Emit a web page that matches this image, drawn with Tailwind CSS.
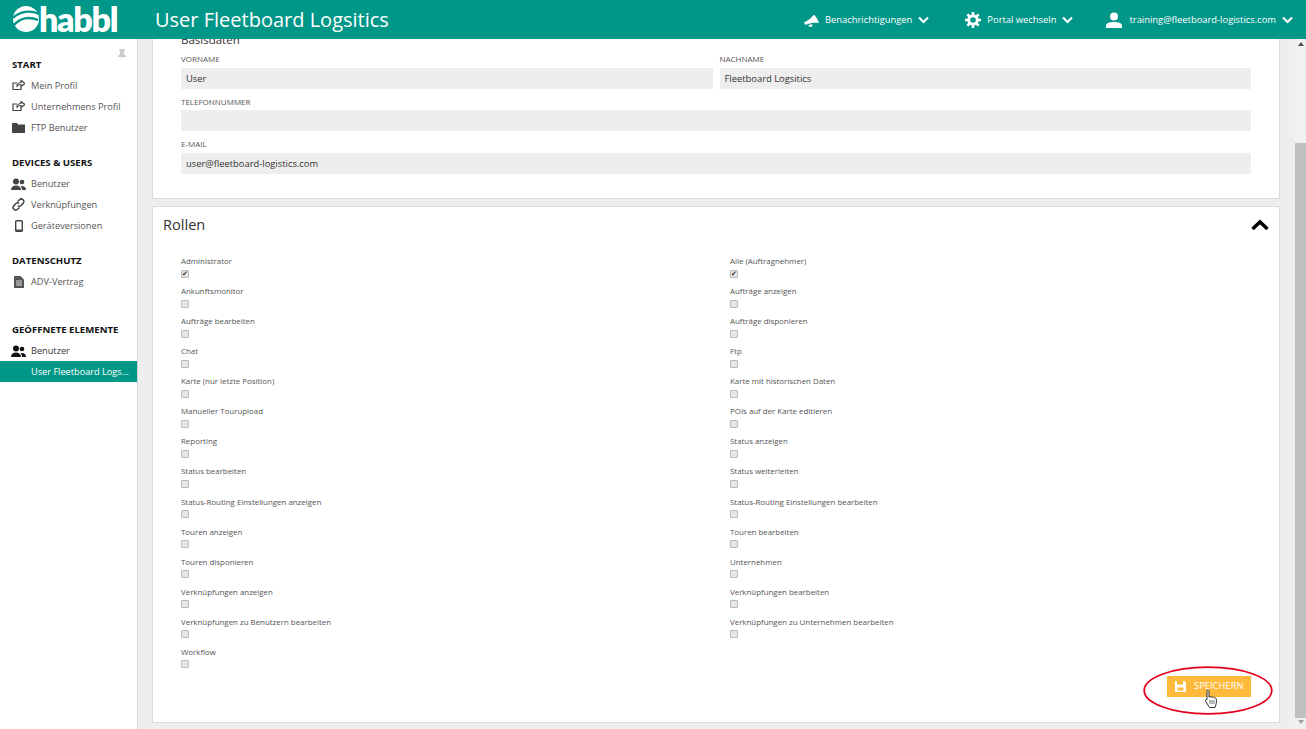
<!DOCTYPE html>
<html lang="de">
<head>
<meta charset="utf-8">
<title>User Fleetboard Logsitics</title>
<script src="https://cdn.jsdelivr.net/npm/@tailwindcss/browser@4"></script>
</head>
<body class="h-[729px] w-[1306px] overflow-hidden bg-[#eeeeee] font-['Open_Sans','Liberation_Sans',sans-serif] text-[#555]">
<div class="relative flex h-[729px] flex-col">
  <header class="relative z-10 flex h-[39px] shrink-0 items-center bg-[#009688] text-white">
    <div class="flex w-[155px] items-center pl-[12px]">
      <svg width="28" height="28" viewBox="0 0 28 28" class="-mt-[1px]"><circle cx="14" cy="14" r="13" fill="#fff"/><path d="M1 13C8 6 18 5 27 9M2 20C8 13 17 11 26 15" stroke="#009688" stroke-width="2.400" fill="none"/></svg>
      <span class="-ml-[1px] mt-[-1px] text-[34px] leading-[38px] font-extrabold tracking-[-1.300px] font-['Lato',sans-serif]">habbl</span>
    </div>
    <h1 class="text-[20px] leading-none">User Fleetboard Logsitics</h1>
    <nav class="ml-auto flex items-center pt-[1px] text-[9.400px]">
      <svg width="16" height="13" viewBox="0 0 16 13" class="mr-[5px]"><path d="M0 8.500C4 7 7 4 10 .8c1.500 1 4 5 5 8.200-4-.5-9 0-12 1.500L1 10.500zM4.500 11l4-.8-.5 2.500H5z" fill="#fff"/></svg>
      <span>Benachrichtigungen</span>
      <svg width="11" height="8" viewBox="0 0 11 8" class="ml-[6px]"><path d="M1 1.500 5.500 6 10 1.500" stroke="#fff" stroke-width="2" fill="none"/></svg>
      <svg width="16" height="16" viewBox="0 0 16 16" class="ml-[36px] mr-[6px]"><circle cx="8" cy="8" r="4.300" fill="none" stroke="#fff" stroke-width="3"/><path d="M8 0v16M0 8h16M2.300 2.300l11.400 11.400M13.700 2.300 2.300 13.700" stroke="#fff" stroke-width="2.600" stroke-dasharray="3 10 3 0"/></svg>
      <span>Portal wechseln</span>
      <svg width="11" height="8" viewBox="0 0 11 8" class="ml-[6px]"><path d="M1 1.500 5.500 6 10 1.500" stroke="#fff" stroke-width="2" fill="none"/></svg>
      <svg width="16" height="16" viewBox="0 0 16 16" class="ml-[33px] mr-[7px]"><circle cx="8" cy="4.500" r="4" fill="#fff"/><path d="M0 16v-2.500C0 11 4 10 8 10s8 1 8 3.500V16z" fill="#fff"/></svg>
      <span>training@fleetboard-logistics.com</span>
      <svg width="11" height="8" viewBox="0 0 11 8" class="ml-[6px] mr-[13px]"><path d="M1 1.500 5.500 6 10 1.500" stroke="#fff" stroke-width="2" fill="none"/></svg>
    </nav>
  </header>

  <div class="flex min-h-0 flex-1">
    <aside class="relative w-[138px] shrink-0 border-r border-[#d5d5d5] bg-white pt-[15px] text-[9.200px] whitespace-nowrap">
      <svg width="8" height="12" viewBox="0 0 8 12" class="absolute left-[118px] top-[10px]"><path d="M1 0h6v1L6 2v3l2 2v1H4.500L4 12l-.5-4H0V7l2-2V2L1 1z" fill="#ccc"/></svg>
      <h2 class="h-[21px] pl-[12px] text-[9.600px] leading-[21px] font-bold text-[#111]">START</h2>
      <a class="flex h-[21px] items-center"><span class="flex w-[31px] justify-center pl-[6px]"><svg width="13" height="11" viewBox="0 0 13 11"><path d="M9 6.500v3H1V3h4M5 6c0-2 2-3.500 4-3.500V.5L13 3.500 9 6.500v-2C7.500 4.500 6 5 5 6z" stroke="#444" stroke-width="1.200" fill="none"/></svg></span>Mein Profil</a>
      <a class="flex h-[21px] items-center"><span class="flex w-[31px] justify-center pl-[6px]"><svg width="13" height="11" viewBox="0 0 13 11"><path d="M9 6.500v3H1V3h4M5 6c0-2 2-3.500 4-3.500V.5L13 3.500 9 6.500v-2C7.500 4.500 6 5 5 6z" stroke="#444" stroke-width="1.200" fill="none"/></svg></span>Unternehmens Profil</a>
      <a class="flex h-[21px] items-center"><span class="flex w-[31px] justify-center pl-[6px]"><svg width="13" height="10" viewBox="0 0 13 10"><path d="M0 0h5l1 1.500h7V10H0z" fill="#444"/></svg></span>FTP Benutzer</a>

      <h2 class="mt-[14px] h-[21px] pl-[12px] text-[9.600px] leading-[21px] font-bold text-[#111]">DEVICES &amp; USERS</h2>
      <a class="flex h-[21px] items-center"><span class="flex w-[31px] justify-center pl-[6px]"><svg width="15" height="12" viewBox="0 0 15 12"><circle cx="5" cy="3.500" r="3" fill="#444"/><path d="M0 12c0-3 2-4.500 5-4.500s5 1.500 5 4.500z" fill="#444"/><circle cx="11" cy="4" r="2.300" fill="#444"/><path d="M11 8c2 0 4 1 4 4h-4c0-1.500-.5-3-1.500-3.500z" fill="#444"/></svg></span>Benutzer</a>
      <a class="flex h-[21px] items-center"><span class="flex w-[31px] justify-center pl-[6px]"><svg width="13" height="13" viewBox="0 0 13 13"><path d="M5.500 3.500 7.500 1.800a2.500 2.500 0 0 1 3.600 3.600L9 7.500a2.500 2.500 0 0 1-3.200.2M7.500 9.500l-2 1.700a2.500 2.500 0 0 1-3.600-3.600L4 5.500a2.500 2.500 0 0 1 3.200-.2" stroke="#444" stroke-width="1.500" fill="none"/></svg></span>Verknüpfungen</a>
      <a class="flex h-[21px] items-center"><span class="flex w-[31px] justify-center pl-[6px]"><svg width="8" height="12" viewBox="0 0 8 12"><rect x=".7" y=".7" width="6.600" height="10.600" rx="1" stroke="#444" stroke-width="1.400" fill="none"/><path d="M1 9.500h6V12H1z" fill="#444"/></svg></span>Geräteversionen</a>

      <h2 class="mt-[14px] h-[21px] pl-[12px] text-[9.600px] leading-[21px] font-bold text-[#111]">DATENSCHUTZ</h2>
      <a class="flex h-[21px] items-center"><span class="flex w-[31px] justify-center pl-[6px]"><svg width="10" height="12" viewBox="0 0 10 12"><path d="M0 0h6.500L10 3.500V12H0z" fill="#555"/><path d="M2 5h6M2 7h6M2 9h6" stroke="#fff" stroke-width=".8"/></svg></span>ADV-Vertrag</a>

      <h2 class="mt-[27px] h-[21px] pl-[12px] text-[9.600px] leading-[21px] font-bold text-[#111]">GEÖFFNETE ELEMENTE</h2>
      <a class="flex h-[21px] items-center text-[#333]"><span class="flex w-[31px] justify-center pl-[6px]"><svg width="15" height="12" viewBox="0 0 15 12"><circle cx="5" cy="3.500" r="3" fill="#111"/><path d="M0 12c0-3 2-4.500 5-4.500s5 1.500 5 4.500z" fill="#111"/><circle cx="11" cy="4" r="2.300" fill="#111"/><path d="M11 8c2 0 4 1 4 4h-4c0-1.500-.5-3-1.500-3.500z" fill="#111"/></svg></span>Benutzer</a>
      <a class="flex h-[21px] items-center bg-[#009688] pl-[31px] text-white">User Fleetboard Logs...</a>
    </aside>

    <main class="min-w-0 flex-1 overflow-hidden pl-[14px] pr-[15px]">
      <section class="-mt-[26px] h-[186px] border-[1px] border-[#dcdcdc] bg-white pl-[28px] pr-[28px] pt-[14px]">
        <h3 class="h-[24px] text-[11.500px] leading-[24px] text-[#333]">Basisdaten</h3>
        <div class="grid grid-cols-2 gap-x-[7px]">
          <label class="block"><span class="block h-[16px] text-[8px] leading-[14px]">VORNAME</span><span class="block h-[21px] bg-[#eeeeee] pl-[5px] text-[9.400px] leading-[21px] text-[#333]">User</span></label>
          <label class="block"><span class="block h-[16px] text-[8px] leading-[14px]">NACHNAME</span><span class="block h-[21px] bg-[#eeeeee] pl-[5px] text-[9.400px] leading-[21px] text-[#333]">Fleetboard Logsitics</span></label>
        </div>
        <label class="mt-[5px] block"><span class="block h-[16px] text-[8px] leading-[15px]">TELEFONNUMMER</span><span class="block h-[21px] bg-[#eeeeee]"></span></label>
        <label class="mt-[6px] block"><span class="block h-[16px] text-[8px] leading-[14px]">E-MAIL</span><span class="block h-[21px] bg-[#eeeeee] pl-[5px] text-[9.400px] leading-[21px] text-[#333]">user@fleetboard-logistics.com</span></label>
      </section>

      <section class="relative mt-[7px] h-[517px] border-[1px] border-[#dcdcdc] bg-white">
        <div class="flex h-[36px] items-center pl-[10px] text-[14.600px] text-[#333]">Rollen</div>
        <svg width="18" height="12" viewBox="0 0 18 12" class="absolute right-[10px] top-[12px]"><path d="M1.500 10 9 3l7.500 7" stroke="#000" stroke-width="3.500" fill="none"/></svg>
        <div class="mt-[12px] grid grid-cols-[549px_1fr] pl-[28px] text-[7.900px] leading-[12px]">
          <div class="h-[30.070px]">Administrator<span class="mt-[2.500px] flex h-[8px] w-[8px] items-center justify-center rounded-[1px] border border-[#bbb] bg-[#e6e6e6] text-[7px] leading-none text-[#333]">✔</span></div>
          <div class="h-[30.070px]">Alle (Auftragnehmer)<span class="mt-[2.500px] flex h-[8px] w-[8px] items-center justify-center rounded-[1px] border border-[#bbb] bg-[#e6e6e6] text-[7px] leading-none text-[#333]">✔</span></div>
          <div class="h-[30.070px]">Ankunftsmonitor<span class="mt-[2.500px] block h-[8px] w-[8px] rounded-[1px] border border-[#bbb] bg-[#e6e6e6]"></span></div>
          <div class="h-[30.070px]">Aufträge anzeigen<span class="mt-[2.500px] block h-[8px] w-[8px] rounded-[1px] border border-[#bbb] bg-[#e6e6e6]"></span></div>
          <div class="h-[30.070px]">Aufträge bearbeiten<span class="mt-[2.500px] block h-[8px] w-[8px] rounded-[1px] border border-[#bbb] bg-[#e6e6e6]"></span></div>
          <div class="h-[30.070px]">Aufträge disponieren<span class="mt-[2.500px] block h-[8px] w-[8px] rounded-[1px] border border-[#bbb] bg-[#e6e6e6]"></span></div>
          <div class="h-[30.070px]">Chat<span class="mt-[2.500px] block h-[8px] w-[8px] rounded-[1px] border border-[#bbb] bg-[#e6e6e6]"></span></div>
          <div class="h-[30.070px]">Ftp<span class="mt-[2.500px] block h-[8px] w-[8px] rounded-[1px] border border-[#bbb] bg-[#e6e6e6]"></span></div>
          <div class="h-[30.070px]">Karte (nur letzte Position)<span class="mt-[2.500px] block h-[8px] w-[8px] rounded-[1px] border border-[#bbb] bg-[#e6e6e6]"></span></div>
          <div class="h-[30.070px]">Karte mit historischen Daten<span class="mt-[2.500px] block h-[8px] w-[8px] rounded-[1px] border border-[#bbb] bg-[#e6e6e6]"></span></div>
          <div class="h-[30.070px]">Manueller Tourupload<span class="mt-[2.500px] block h-[8px] w-[8px] rounded-[1px] border border-[#bbb] bg-[#e6e6e6]"></span></div>
          <div class="h-[30.070px]">POIs auf der Karte editieren<span class="mt-[2.500px] block h-[8px] w-[8px] rounded-[1px] border border-[#bbb] bg-[#e6e6e6]"></span></div>
          <div class="h-[30.070px]">Reporting<span class="mt-[2.500px] block h-[8px] w-[8px] rounded-[1px] border border-[#bbb] bg-[#e6e6e6]"></span></div>
          <div class="h-[30.070px]">Status anzeigen<span class="mt-[2.500px] block h-[8px] w-[8px] rounded-[1px] border border-[#bbb] bg-[#e6e6e6]"></span></div>
          <div class="h-[30.070px]">Status bearbeiten<span class="mt-[2.500px] block h-[8px] w-[8px] rounded-[1px] border border-[#bbb] bg-[#e6e6e6]"></span></div>
          <div class="h-[30.070px]">Status weiterleiten<span class="mt-[2.500px] block h-[8px] w-[8px] rounded-[1px] border border-[#bbb] bg-[#e6e6e6]"></span></div>
          <div class="h-[30.070px]">Status-Routing Einstellungen anzeigen<span class="mt-[2.500px] block h-[8px] w-[8px] rounded-[1px] border border-[#bbb] bg-[#e6e6e6]"></span></div>
          <div class="h-[30.070px]">Status-Routing Einstellungen bearbeiten<span class="mt-[2.500px] block h-[8px] w-[8px] rounded-[1px] border border-[#bbb] bg-[#e6e6e6]"></span></div>
          <div class="h-[30.070px]">Touren anzeigen<span class="mt-[2.500px] block h-[8px] w-[8px] rounded-[1px] border border-[#bbb] bg-[#e6e6e6]"></span></div>
          <div class="h-[30.070px]">Touren bearbeiten<span class="mt-[2.500px] block h-[8px] w-[8px] rounded-[1px] border border-[#bbb] bg-[#e6e6e6]"></span></div>
          <div class="h-[30.070px]">Touren disponieren<span class="mt-[2.500px] block h-[8px] w-[8px] rounded-[1px] border border-[#bbb] bg-[#e6e6e6]"></span></div>
          <div class="h-[30.070px]">Unternehmen<span class="mt-[2.500px] block h-[8px] w-[8px] rounded-[1px] border border-[#bbb] bg-[#e6e6e6]"></span></div>
          <div class="h-[30.070px]">Verknüpfungen anzeigen<span class="mt-[2.500px] block h-[8px] w-[8px] rounded-[1px] border border-[#bbb] bg-[#e6e6e6]"></span></div>
          <div class="h-[30.070px]">Verknüpfungen bearbeiten<span class="mt-[2.500px] block h-[8px] w-[8px] rounded-[1px] border border-[#bbb] bg-[#e6e6e6]"></span></div>
          <div class="h-[30.070px]">Verknüpfungen zu Benutzern bearbeiten<span class="mt-[2.500px] block h-[8px] w-[8px] rounded-[1px] border border-[#bbb] bg-[#e6e6e6]"></span></div>
          <div class="h-[30.070px]">Verknüpfungen zu Unternehmen bearbeiten<span class="mt-[2.500px] block h-[8px] w-[8px] rounded-[1px] border border-[#bbb] bg-[#e6e6e6]"></span></div>
          <div class="h-[30.070px]">Workflow<span class="mt-[2.500px] block h-[8px] w-[8px] rounded-[1px] border border-[#bbb] bg-[#e6e6e6]"></span></div>
        </div>
        <button class="absolute left-[1014px] top-[469px] flex h-[21px] w-[84px] items-center bg-[#ffb93b] pl-[8px] text-[9.400px] text-white">
          <svg width="11" height="11" viewBox="0 0 11 11" class="mr-[8px] -mt-[1px]"><path d="M0 0h2v3.500h6V0h1.500L11 1.500V11H0zM2.500 6.500v3h6v-3z" fill="#fff"/></svg>
          SPEICHERN
        </button>
      </section>
    </main>

    <div class="flex w-[11px] shrink-0 flex-col bg-[#f1f1f1]">
      <div class="flex h-[104px] justify-center pt-[3px]"><svg width="6" height="4" viewBox="0 0 6 4"><path d="M3 0l3 4H0z" fill="#505050"/></svg></div>
      <div class="h-[575px] bg-[#c1c1c1]"></div>
      <div class="flex flex-1 justify-center pt-[2px]"><svg width="6" height="4" viewBox="0 0 6 4"><path d="M0 0h6L3 4z" fill="#a0a0a0"/></svg></div>
    </div>
  </div>

  <svg width="130" height="50" viewBox="0 0 130 50" class="absolute left-[1143px] top-[666px] z-20"><ellipse cx="65" cy="24.500" rx="63.800" ry="23.300" fill="none" stroke="#e3001b" stroke-width="1.800"/></svg>
  <svg width="14" height="20" viewBox="0 0 14 20" class="absolute left-[1204px] top-[689px] z-30"><path d="M3 1.500c.8-.8 2-.3 2 .8V8l1-.3c.7-.2 1.500 0 2 .5 1-.3 1.700 0 2 .6 1-.2 2 .3 2.300 1.200.3 2 .2 4-.5 6l-.8 2.500H5.500L1.500 12c-.6-1 .5-2 1.500-1.200V2.300z" fill="#fff" stroke="#333" stroke-width="1"/><path d="M6 11v4M8 11v4M10 11v4" stroke="#333" stroke-width=".7"/></svg>
</div>
</body>
</html>
